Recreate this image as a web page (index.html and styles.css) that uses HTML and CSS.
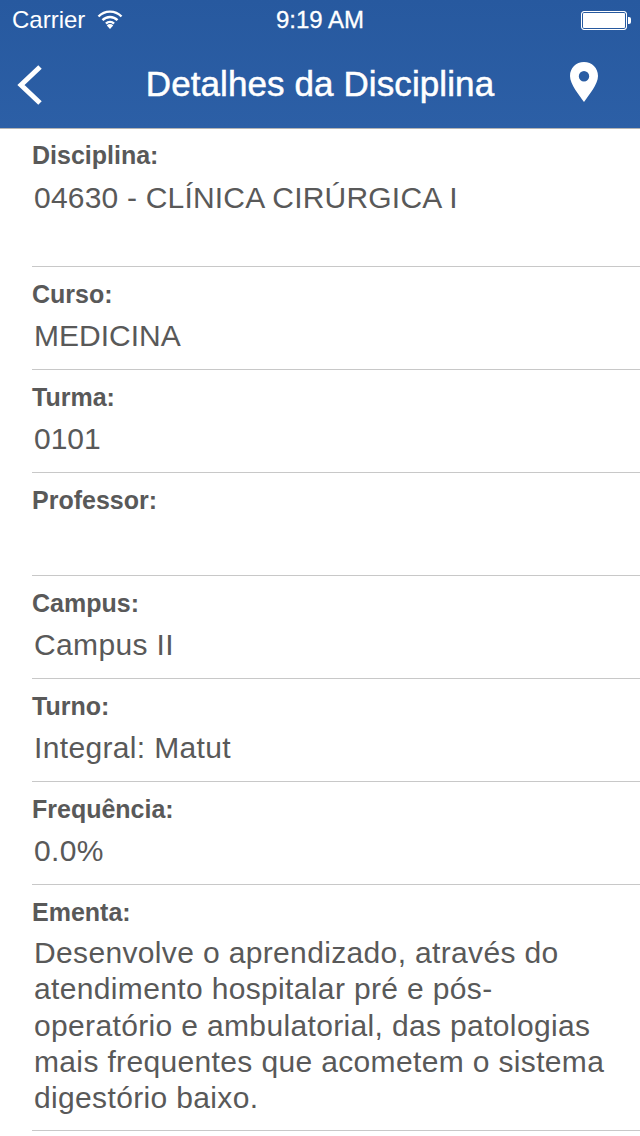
FILE: index.html
```html
<!DOCTYPE html>
<html lang="pt">
<head>
<meta charset="utf-8">
<title>Detalhes da Disciplina</title>
<link rel="stylesheet" href="styles.css">
</head>
<body>
<header class="top">
  <div class="status">
    <div class="status-left">
      <span>Carrier</span>
      <svg class="wifi" width="26" height="20" viewBox="0 0 26 20"><path d="M1.500 7.500a16 16 0 0 1 23 0M5.500 11.200a10.500 10.500 0 0 1 15 0M9 14.600a5.400 5.400 0 0 1 8 0" fill="none" stroke="#fff" stroke-width="2.400"/><path d="M13 20l-3.200-3.500a4.400 4.400 0 0 1 6.400 0z" fill="#fff"/></svg>
    </div>
    <span class="time">9:19 AM</span>
    <div class="battery"><span class="cell"></span><span class="tip"></span></div>
  </div>
  <nav class="bar">
    <svg class="back" width="28" height="42" viewBox="0 0 28 42"><path d="M25 3L6 21l19 18" fill="none" stroke="#fff" stroke-width="5"/></svg>
    <h1>Detalhes da Disciplina</h1>
    <svg class="pin" width="28" height="40" viewBox="0 0 28 40"><path fill-rule="evenodd" fill="#fff" d="M14 0C6 0 0 6 0 14c0 8 9 19 14 26 5-7 14-18 14-26C28 6 22 0 14 0zm0 9a5.200 5.200 0 1 1 0 10.400a5.200 5.200 0 0 1 0-10.400z"/></svg>
  </nav>
</header>
<main class="list">
  <section class="row first"><div class="label">Disciplina:</div><div class="value caps">04630 - CLÍNICA CIRÚRGICA I</div></section>
  <section class="row"><div class="label">Curso:</div><div class="value flat">MEDICINA</div></section>
  <section class="row"><div class="label">Turma:</div><div class="value flat">0101</div></section>
  <section class="row"><div class="label">Professor:</div><div class="value"></div></section>
  <section class="row"><div class="label">Campus:</div><div class="value">Campus II</div></section>
  <section class="row"><div class="label">Turno:</div><div class="value">Integral: Matut</div></section>
  <section class="row"><div class="label">Frequência:</div><div class="value">0.0%</div></section>
  <section class="row last"><div class="label">Ementa:</div><div class="value">Desenvolve o aprendizado, através do<br>atendimento hospitalar pré e pós-<br>operatório e ambulatorial, das patologias<br>mais frequentes que acometem o sistema<br>digestório baixo.</div></section>
</main>
</body>
</html>
```
FILE: styles.css
```css
* { box-sizing: border-box; }
html, body { margin: 0; padding: 0; }
body { width: 640px; height: 1136px; overflow: hidden; background: #fff; font-family: "Liberation Sans", Arial, sans-serif; color: #595959; }
.top { height: 129px; background: linear-gradient(#27599f, #2c5fa6); border-bottom: 1px solid #b4b4b4; color: #fff; }
.status { height: 40px; display: flex; align-items: center; justify-content: space-between; padding: 0 12px; position: relative; font-size: 24px; }
.status-left { display: flex; align-items: center; gap: 12px; }
.wifi { margin-top: -2px; }
.time { position: absolute; left: 0; right: 0; text-align: center; font-weight: 400; -webkit-text-stroke: 0.3px #fff; }
.battery { display: flex; align-items: center; margin-right: -3px; }
.cell { width: 46px; height: 19px; border: 1px solid #fff; border-radius: 3px; background: #fff; box-shadow: inset 0 0 0 1px #27599f; }
.tip { width: 3px; height: 7px; background: #fff; border-radius: 0 2px 2px 0; margin-left: 1px; }
.bar { height: 88px; display: flex; align-items: center; justify-content: space-between; padding: 0 42px 0 16px; position: relative; }
.bar h1 { position: absolute; left: 0; right: 0; margin: 0; text-align: center; font-size: 35px; letter-spacing: 0.1px; font-weight: 400; -webkit-text-stroke: 0.5px #fff; }
.back { margin-top: 2px; margin-left: -1px; }
.pin { margin-top: -4px; }
.list { padding-left: 32px; }
.row { height: 103px; border-bottom: 1px solid #c8c8c8; padding-top: 13px; }
.row.first { height: 138px; padding-top: 12px; }
.row.last { height: 246px; }
.label { font-size: 25px; line-height: 28px; font-weight: 700; color: #595959; }
.value { font-size: 30px; line-height: 36.25px; margin: 10px 0 0 2px; letter-spacing: 0.35px; color: #595959; white-space: nowrap; }
.row.first .value { margin-top: 11px; }
.row.last .value { margin-top: 9px; }
.value.caps { letter-spacing: 0.2px; }
.value.flat { letter-spacing: 0; }
```
